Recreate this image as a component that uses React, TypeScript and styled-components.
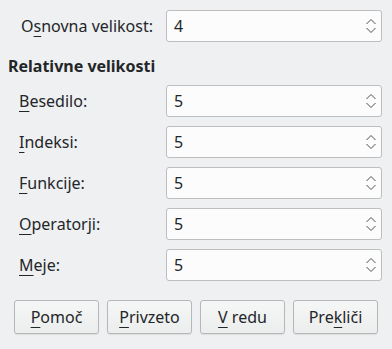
import React from "react";
import styled, { createGlobalStyle } from "styled-components";

const GlobalStyle = createGlobalStyle`
  html, body {
    margin: 0;
    padding: 0;
    background: #eff0f1;
  }
  body {
    font-family: "Noto Sans", "DejaVu Sans", sans-serif;
    font-size: 16px;
    color: #232629;
  }
`;

const Dialog = styled.div`
  width: 392px;
  height: 349px;
  box-sizing: border-box;
  padding: 10px 10px 0 8px;
  display: flex;
  flex-direction: column;
`;

const Form = styled.div`
  display: grid;
  grid-template-columns: 158px 216px;
  row-gap: 9px;
  align-items: center;
`;

const Label = styled.label<{ $right?: boolean }>`
  text-align: ${(p) => (p.$right ? "right" : "left")};
  padding-left: ${(p) => (p.$right ? "0" : "11px")};
  padding-right: ${(p) => (p.$right ? "13px" : "0")};
  line-height: 20px;
  white-space: nowrap;
`;

const Heading = styled.div`
  grid-column: 1 / 3;
  font-weight: 700;
  line-height: 20px;
  margin: 5px 0 0;
`;

const Mn = styled.span`
  text-decoration: underline;
  text-underline-offset: 4px;
  text-decoration-thickness: 1px;
`;

const SpinBox = styled.div`
  height: 32px;
  box-sizing: border-box;
  border: 1px solid #bcbebf;
  border-radius: 3px;
  background: #fcfcfc;
  display: flex;
  align-items: center;
  padding: 0 4px 0 7px;
`;

const SpinValue = styled.span`
  flex: 1;
  line-height: 20px;
`;

const Arrows = styled.svg`
  width: 12px;
  height: 20px;
  display: block;
`;

const ButtonRow = styled.div`
  display: flex;
  gap: 8px;
  padding: 0 4px 0 6px;
  margin-top: 19px;
`;

const Button = styled.button`
  width: 85px;
  height: 34px;
  box-sizing: border-box;
  border: 1px solid #b5b7b9;
  border-radius: 3px;
  background: linear-gradient(#f5f6f6, #eceded);
  box-shadow: 0 1px 1px rgba(0, 0, 0, 0.08);
  font-family: inherit;
  font-size: 16px;
  color: #232629;
  padding: 0;
`;

function Spin({ value }: { value: string }) {
  return (
    <SpinBox>
      <SpinValue>{value}</SpinValue>
      <Arrows viewBox="0 0 12 20">
        <path d="M1.5 8 L6 3.5 L10.5 8" fill="none" stroke="#4d4f52" strokeWidth="1" />
        <path d="M1.5 12 L6 16.5 L10.5 12" fill="none" stroke="#4d4f52" strokeWidth="1" />
      </Arrows>
    </SpinBox>
  );
}

const rows: { mn: string; post: string }[] = [
  { mn: "B", post: "esedilo:" },
  { mn: "I", post: "ndeksi:" },
  { mn: "F", post: "unkcije:" },
  { mn: "O", post: "peratorji:" },
  { mn: "M", post: "eje:" },
];

export default function App() {
  return (
    <>
      <GlobalStyle />
      <Dialog>
        <Form>
          <Label $right>
            O<Mn>s</Mn>novna velikost:
          </Label>
          <Spin value="4" />
          <Heading>Relativne velikosti</Heading>
          {rows.map((r) => (
            <React.Fragment key={r.post}>
              <Label>
                <Mn>{r.mn}</Mn>
                {r.post}
              </Label>
              <Spin value="5" />
            </React.Fragment>
          ))}
        </Form>
        <ButtonRow>
          <Button>
            <Mn>P</Mn>omoč
          </Button>
          <Button>
            <Mn>P</Mn>rivzeto
          </Button>
          <Button>
            <Mn>V</Mn> redu
          </Button>
          <Button>
            Pre<Mn>k</Mn>liči
          </Button>
        </ButtonRow>
      </Dialog>
    </>
  );
}
